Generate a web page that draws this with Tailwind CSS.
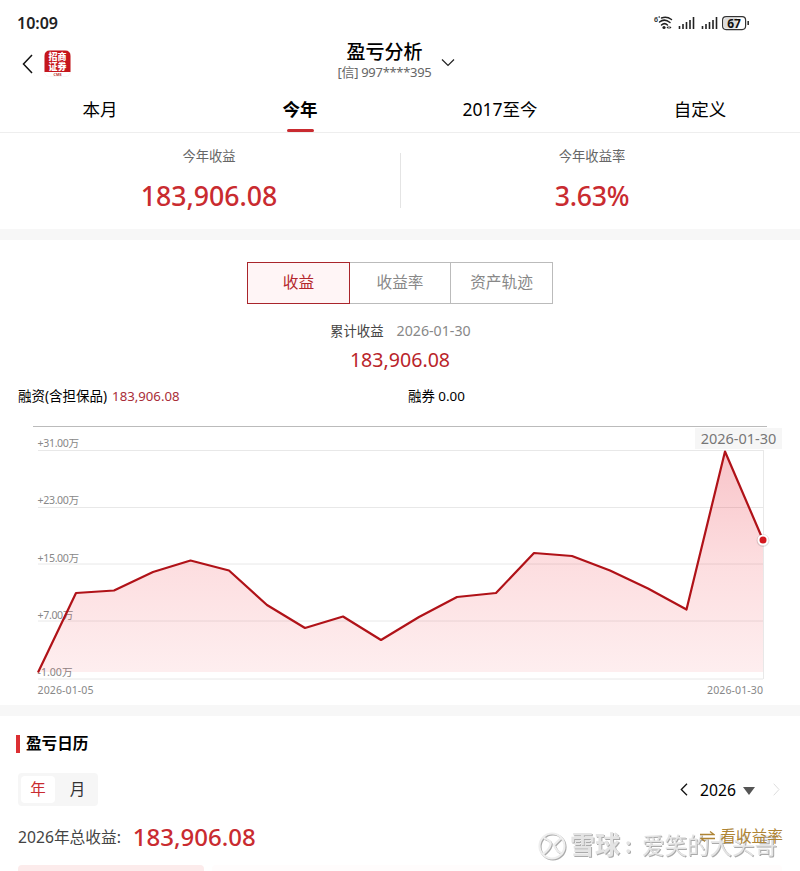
<!DOCTYPE html>
<html lang="zh-CN">
<head>
    <meta charset="UTF-8">
    <meta name="viewport" content="width=device-width, initial-scale=1.0">
    <title>盈亏分析</title>
    <script src="https://cdn.jsdelivr.net/npm/@tailwindcss/browser@4"></script>
</head>
<body class="bg-white text-black font-['Noto_Sans','Noto_Sans_CJK_SC',sans-serif] w-[800px] h-[871px] overflow-hidden relative">
    <!-- Status bar -->
    <div class="h-[46px] flex items-center justify-between pl-[17px] pr-[51px]">
        <span class="text-[16px] leading-none font-semibold text-[#222]">10:09</span>
        <svg class="shrink-0" width="96" height="18" viewBox="0 0 96 18">
            <text x="1" y="8" font-size="7" font-weight="600" fill="#222">6</text>
            <circle cx="6.200" cy="3" r="0.8" fill="#222"/>
            <g fill="none" stroke="#222" stroke-width="1.500" stroke-linecap="round">
                <path d="M8.500 4Q13.500 1.800 18.500 5.500"/>
                <path d="M6.500 8Q11.500 4 17 8.500"/>
                <path d="M8.500 11Q11.500 8.300 14.500 11"/>
            </g>
            <circle cx="11" cy="13.500" r="1.600" fill="#222"/>
            <path d="M13.500 13.500l2-1.500v3zM18.500 13.500l-2-1.500v3z" fill="#222"/>
            <path d="M26.500 15v-3M30 15v-5M33.500 15v-7M37 15v-9M40.500 15V3M49.500 15v-3M53 15v-5M56.500 15v-7M60 15v-9M63.500 15V3" stroke="#222" stroke-width="1.600"/>
            <rect x="69.600" y="2.600" width="23" height="13" rx="3.500" fill="#fff" stroke="#333" stroke-width="1.200"/>
            <path d="M73 4h11v10.500H73q-2-.5-2-2V6q0-2 2-2z" fill="#ddd"/>
            <rect x="94.400" y="7" width="1.600" height="4" fill="#333"/>
            <text x="81" y="13.500" text-anchor="middle" font-size="12" font-weight="700" fill="#111">67</text>
        </svg>
    </div>

    <!-- Header -->
    <div class="h-[40px] grid grid-cols-[337px_95px_1fr]">
        <div class="flex items-start pl-[22px] pt-[4px]">
            <svg class="mt-[4px]" width="11" height="20" viewBox="0 0 11 20"><path d="M10 1L1.500 10L10 19" fill="none" stroke="#111" stroke-width="1.500"/></svg>
            <svg class="ml-[11px]" width="28" height="27" viewBox="0 0 28 27">
                <rect x=".5" y="0.500" width="26" height="26" rx="5" fill="#fff" stroke="#eee" stroke-width=".5"/>
                <path d="M.5 22V6Q.5 .5 6 .5H21Q26.500 .5 26.500 6V22z" fill="#c5161c"/>
                <g fill="#fff" font-size="9" font-weight="900" text-anchor="middle" font-family="Noto Sans CJK SC">
                    <text x="13.500" y="10">招商</text>
                    <text x="13.500" y="19.800">证券</text>
                </g>
                <text x="13.500" y="25.500" font-size="3.800" font-weight="700" text-anchor="middle" fill="#b33">CMS</text>
            </svg>
        </div>
        <div class="flex flex-col items-center whitespace-nowrap">
            <h1 class="text-[19px] leading-[17px] font-medium font-['Noto_Sans_CJK_SC'] -mt-[4px]">盈亏分析</h1>
            <span class="text-[13px] leading-[16px] tracking-[-0.3px] text-[#666] mt-[5px]">[信] 997****395</span>
        </div>
        <svg class="ml-[9px] mt-[12px]" width="14" height="9" viewBox="0 0 14 9"><path d="M1 1.500L7 7.500L13 1.500" fill="none" stroke="#222" stroke-width="1.200"/></svg>
    </div>

    <!-- Period tabs -->
    <div class="h-[47px] grid grid-cols-4 text-center text-[17.500px] leading-[46px] border-b border-[#eee]">
        <span>本月</span>
        <span class="font-bold flex flex-col items-center">
            <span class="h-[43px] leading-[46px]">今年</span>
            <span class="w-[27px] h-[3px] rounded-full bg-[#c92b30]"></span>
        </span>
        <span>2017至今</span>
        <span>自定义</span>
    </div>

    <!-- Summary -->
    <div class="h-[96px] flex text-center">
        <div class="w-[400px] pl-[18px] pt-[13px]">
            <p class="text-[13.300px] leading-[20px] text-[#666]">今年收益</p>
            <p class="text-[26.700px] leading-[36px] mt-[12px] font-medium text-[#c92b30]">183,906.08</p>
        </div>
        <div class="w-px h-[55px] mt-[20px] bg-[#e4e4e4]"></div>
        <div class="w-[399px] pr-[17px] pt-[13px]">
            <p class="text-[13.300px] leading-[20px] text-[#666]">今年收益率</p>
            <p class="text-[26.700px] leading-[36px] mt-[12px] tracking-[-0.3px] font-medium text-[#c92b30]">3.63%</p>
        </div>
    </div>
    <div class="h-[11px] bg-[#f7f7f7]"></div>

    <!-- Chart section -->
    <div class="h-[465px] pt-[22px]">
        <div class="flex w-[306px] h-[42px] ml-[247px] text-center text-[15.700px] leading-[38px] text-[#888]">
            <span class="w-[103px] border border-[#a9252b] bg-[#fff5f6] text-[#b3262c]">收益</span>
            <span class="w-[100px] border-y border-[#bbb]">收益率</span>
            <span class="w-[103px] border border-[#bbb]">资产轨迹</span>
        </div>
        <div class="flex h-[18px] mt-[18px] pl-[330px] gap-[13px] leading-[18px] whitespace-nowrap">
            <span class="text-[13.400px] text-[#444]">累计收益</span>
            <span class="text-[14.200px] text-[#888]">2026-01-30</span>
        </div>
        <p class="text-center text-[19.600px] leading-[26px] mt-[7px] text-[#b9242a]">183,906.08</p>
        <div class="flex h-[20px] mt-[13px] pl-[18px] text-[13.200px] leading-[20px] whitespace-nowrap">
            <p class="w-[390px] flex gap-[5px]"><span class="text-[13.500px]">融资(含担保品)</span><span class="text-[#a92d38]">183,906.08</span></p>
            <p class="text-[13.400px]">融券 0.00</p>
        </div>
        <svg class="mt-[9px]" width="800" height="290" viewBox="0 415 800 290">
            <defs>
                <linearGradient id="area" gradientUnits="userSpaceOnUse" x1="0" y1="451" x2="0" y2="672">
                    <stop offset="0" stop-color="#e42b3c" stop-opacity=".28"/>
                    <stop offset=".5" stop-color="#f02d3a" stop-opacity=".16"/>
                    <stop offset="1" stop-color="#f02d3a" stop-opacity=".08"/>
                </linearGradient>
            </defs>
            <path d="M33 426.500H767" stroke="#bbb"/>
            <path d="M38 450.500H763M38 507.500H763M38 564H763M38 621H763M38 679H763M763.500 450V679" stroke="#e8e8e8" fill="none"/>
            <g fill="#888" font-size="10.600">
                <g letter-spacing="-.35">
                    <text x="37.500" y="447">+31.00万</text>
                    <text x="37.500" y="504">+23.00万</text>
                    <text x="37.500" y="561.500">+15.00万</text>
                    <text x="37.500" y="619">+7.00万</text>
                </g>
                <text x="37.500" y="676">-1.00万</text>
                <text x="37.500" y="693.500" textLength="56">2026-01-05</text>
                <text x="707" y="693.500" textLength="56">2026-01-30</text>
            </g>
            <path d="M38 672L76 593L114 590.500L153 572L190.500 560.500L229 570.500L267 605L305 628L343 616.500L381 640L419 617L457 597L496 593L534 553L572 556L610 570.500L648 588.500L686.500 609.500L725 451.500L763 540V672Z" fill="url(#area)"/>
            <path d="M38 672.500L76 593L114 590.500L153 572L190.500 560.500L229 570.500L267 605L305 628L343 616.500L381 640L419 617L457 597L496 593L534 553L572 556L610 570.500L648 588.500L686.500 609.500L725 451.500L763 540" fill="none" stroke="#b01218" stroke-width="2.200" stroke-linejoin="round"/>
            <rect x="695" y="428" width="87" height="21" fill="#f6f6f6"/>
            <text x="738.500" y="443.500" text-anchor="middle" font-size="14.500" fill="#777">2026-01-30</text>
            <circle cx="763" cy="540.500" r="6.500" fill="#000" opacity=".12"/>
            <circle cx="763" cy="540" r="5.500" fill="#fff"/>
            <circle cx="763" cy="540" r="3.500" fill="#d3191f"/>
        </svg>
    </div>
    <div class="h-[11px] bg-[#f7f7f7]"></div>

    <!-- Calendar -->
    <div class="pt-[18px]">
        <div class="flex items-center h-[20px] pl-[16px] gap-[6px]">
            <span class="w-[4px] h-[18px] bg-[#dc2f33]"></span>
            <h2 class="text-[15.600px] leading-[18px] -mt-[2px] font-bold">盈亏日历</h2>
        </div>
        <div class="flex items-center justify-between h-[33px] mt-[19px] pl-[18px] pr-[20px]">
            <div class="flex w-[80px] h-[33px] p-[3px] rounded bg-[#f6f6f6] text-[15.500px] leading-[27px] text-center text-[#333]">
                <span class="w-[34px] bg-white rounded-sm text-[#c92b30]">年</span>
                <span class="flex-1 pl-[5px]">月</span>
            </div>
            <div class="flex items-center">
                <svg width="8" height="13" viewBox="0 0 8 13"><path d="M7 .7L1.300 6.500L7 12.300" fill="none" stroke="#111" stroke-width="1.300"/></svg>
                <span class="text-[15.700px] leading-[20px] ml-[12px]">2026</span>
                <svg class="ml-[7px] mt-[3px]" width="12" height="8" viewBox="0 0 12 8"><path d="M0 0H12L6 8Z" fill="#555"/></svg>
                <svg class="ml-[18px]" width="7" height="13" viewBox="0 0 7 13"><path d="M.7 .7L6 6.500L.7 12.300" fill="none" stroke="#ddd"/></svg>
            </div>
        </div>
        <div class="flex items-center h-[36px] mt-[13px] pl-[18px] pr-[17px] whitespace-nowrap">
            <span class="text-[15.700px] text-[#444] mt-px">2026年总收益:</span>
            <span class="text-[24px] leading-[34px] -mt-px font-medium text-[#c92b30] ml-[12px]">183,906.08</span>
            <span class="relative z-10 ml-auto flex items-center gap-[5px] text-[15.700px] text-[#ae8434]">
                <svg width="15" height="11" viewBox="0 0 15 11"><path d="M0 3.500H14L10 .5M15 7.500H1L5 10.500" fill="none" stroke="#ae8434" stroke-width="1.300"/></svg>看收益率
            </span>
        </div>
        <div class="flex gap-[8px] mt-[10px] px-[18px]">
            <span class="w-[186px] h-[12px] rounded bg-[#fcebeb]"></span>
            <span class="flex-1 h-[12px] rounded bg-[#fffcfc]"></span>
        </div>
    </div>

    <!-- Watermark -->
    <svg class="absolute left-[530px] top-[825px] drop-shadow-[1px_1px_0.500px_#aaa]" width="260" height="42" viewBox="0 0 260 42">
        <g fill="none" stroke="#eee" stroke-width="2.200">
            <circle cx="22" cy="21" r="12.500"/>
            <path d="M14 13Q22 16 20.500 20Q19 25 13 29M31 13L24 20Q26 26 31 28"/>
        </g>
        <g fill="#e4e4e4" font-family="Noto Sans CJK SC">
            <text x="40" y="29" font-size="25" font-weight="700">雪球</text>
            <text x="95" y="28" font-size="20" font-weight="700">:</text>
            <text x="112" y="29" font-size="22.500" font-weight="400">爱笑的大头哥</text>
        </g>
    </svg>
</body>
</html>
